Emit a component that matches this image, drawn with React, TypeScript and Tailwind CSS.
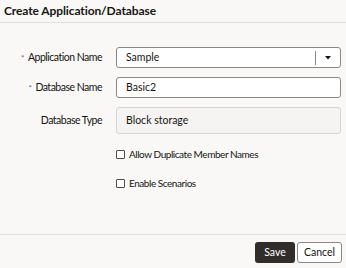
import { useState } from 'react';

function Label({ text, required }: { text: string; required?: boolean }) {
  return (
    <div className="w-[102px] shrink-0 flex justify-end items-center gap-[4px] text-[10.5px] tracking-[-0.5px] text-[#161513]">
      {required && <span className="text-[8px] text-[#4c6b8a] leading-none">*</span>}
      <span>{text}</span>
    </div>
  );
}

function Check({ label }: { label: string }) {
  const [on, setOn] = useState(false);
  return (
    <label className="h-[14px] flex items-center gap-[4px] text-[10px] tracking-[-0.45px] text-[#161513] cursor-pointer">
      <span
        onClick={() => setOn(!on)}
        className="w-[9px] h-[9px] border border-[#4f4b48] rounded-[1px] bg-white flex items-center justify-center"
      >
        {on && <span className="w-[5px] h-[5px] bg-[#312d2a]" />}
      </span>
      <span>{label}</span>
    </label>
  );
}

export default function App() {
  return (
    <div
      className="w-[346px] h-[268px] bg-[#f9f8f6] flex flex-col overflow-hidden"
      style={{ fontFamily: 'Lato, "Noto Sans", sans-serif' }}
    >
      <div className="h-[23px] border-b border-[#e0dedb] px-[4px] flex items-center">
        <h1 className="text-[12px] font-bold tracking-[-0.1px] text-[#161513]">Create Application/Database</h1>
      </div>

      <div className="flex-1 flex flex-col pt-[24px] pr-[5px]">
        <div className="flex items-center gap-[14px] h-[21px]">
          <Label text="Application Name" required />
          <div className="flex-1 h-[21px] bg-white border border-[#8b8784] rounded-[3px] flex items-center">
            <span className="flex-1 pl-[9px] text-[10.5px] text-[#161513]">Sample</span>
            <span className="w-px h-[14px] bg-[#8b8784]" />
            <span className="w-[24px] flex items-center justify-center">
              <svg width="6" height="4" viewBox="0 0 6 4">
                <path d="M0 0h6L3 3.5z" fill="#161513" />
              </svg>
            </span>
          </div>
        </div>

        <div className="flex items-center gap-[14px] h-[21px] mt-[9px]">
          <Label text="Database Name" required />
          <div className="flex-1 h-[21px] bg-white border border-[#8b8784] rounded-[3px] flex items-center pl-[9px] text-[10.5px] text-[#161513]">
            Basic2
          </div>
        </div>

        <div className="flex items-center gap-[14px] mt-[9px]">
          <Label text="Database Type" />
          <div className="flex-1 h-[27px] bg-[#f5f4f2] border border-[#d6d3d0] rounded-[3px] flex items-center pl-[9px] text-[10.5px] text-[#161513]">
            Block storage
          </div>
        </div>

        <div className="flex flex-col gap-[15px] pl-[116px] mt-[13px]">
          <Check label="Allow Duplicate Member Names" />
          <Check label="Enable Scenarios" />
        </div>
      </div>

      <div className="h-[34px] border-t border-[#e0dedb] flex items-start justify-end gap-[2px] pr-[4px] pt-[7px]">
        <button className="h-[21px] w-[40px] rounded-[3px] bg-[#312d2a] text-white text-[10.5px]">Save</button>
        <button className="h-[21px] w-[45px] rounded-[3px] bg-white border border-[#8b8784] text-[#161513] text-[10.5px]">
          Cancel
        </button>
      </div>
    </div>
  );
}
